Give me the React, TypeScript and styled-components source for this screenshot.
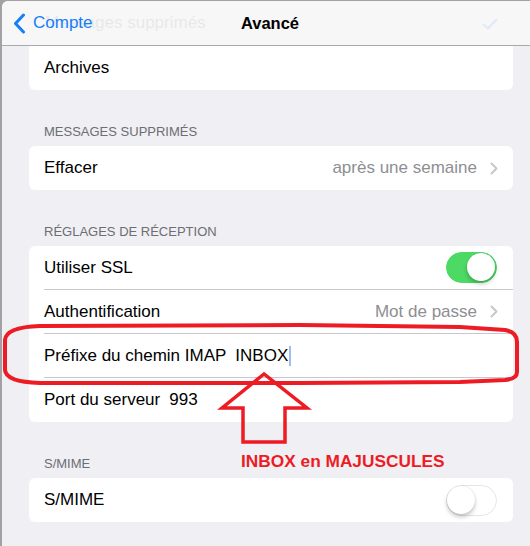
import styled, { createGlobalStyle } from 'styled-components';

const GlobalStyle = createGlobalStyle`
  html, body {
    margin: 0;
    padding: 0;
    background: #a2a2a4;
    overflow: hidden;
  }
  body {
    font-family: "Liberation Sans", Arial, sans-serif;
    -webkit-font-smoothing: antialiased;
  }
`;

const Chevron = () => (
  <svg width="8" height="13" viewBox="0 0 8 13">
    <path d="M1.5 1.5 L6.5 6.5 L1.5 11.5" fill="none" stroke="#c7c7cc" strokeWidth="2" strokeLinecap="round" strokeLinejoin="round" />
  </svg>
);

const BackArrow = () => (
  <svg width="13" height="21" viewBox="0 0 13 21">
    <path d="M10.5 2 L2.5 10.5 L10.5 19" fill="none" stroke="#157efb" strokeWidth="3" strokeLinecap="round" strokeLinejoin="round" />
  </svg>
);

export default function App() {
  return (
    <Page>
      <GlobalStyle />
      <Sheet>
        <NavBar>
          <BackButton>
            <BackArrow />
            <span>Compte</span>
          </BackButton>
          <Title>Avancé</Title>
          <span />
          <GhostTitle>Messages supprimés</GhostTitle>
          <GhostCheck width="16" height="12" viewBox="0 0 16 12">
            <path d="M1.5 6.5 L6 10.5 L14.5 1.5" fill="none" stroke="#157efb" strokeWidth="2" strokeLinecap="round" strokeLinejoin="round" />
          </GhostCheck>
        </NavBar>

        <Content>
          <Card $flatTop>
            <Row>
              <RowInner>
                <Label>Archives</Label>
              </RowInner>
            </Row>
          </Card>

          <Group>
            <GroupTitle>Messages supprimés</GroupTitle>
            <Card>
              <Row>
                <RowInner>
                  <Label>Effacer</Label>
                  <Detail>
                    <Value>après une semaine</Value>
                    <Chevron />
                  </Detail>
                </RowInner>
              </Row>
            </Card>
          </Group>

          <Group>
            <GroupTitle>Réglages de réception</GroupTitle>
            <Card>
              <Row>
                <RowInner $switch>
                  <Label>Utiliser SSL</Label>
                  <Switch $on>
                    <Knob $on />
                  </Switch>
                </RowInner>
              </Row>
              <Row>
                <RowInner>
                  <Label>Authentification</Label>
                  <Detail>
                    <Value>Mot de passe</Value>
                    <Chevron />
                  </Detail>
                </RowInner>
              </Row>
              <Row>
                <RowInner>
                  <FieldLine>
                    <Label>Préfixe du chemin IMAP</Label>
                    <FieldValue>INBOX</FieldValue>
                    <Caret />
                  </FieldLine>
                </RowInner>
              </Row>
              <Row>
                <RowInner>
                  <FieldLine>
                    <Label>Port du serveur</Label>
                    <FieldValue>993</FieldValue>
                  </FieldLine>
                </RowInner>
              </Row>
            </Card>
          </Group>

          <Group>
            <GroupTitle>S/MIME</GroupTitle>
            <Card>
              <Row>
                <RowInner $switch>
                  <Label>S/MIME</Label>
                  <Switch>
                    <Knob />
                  </Switch>
                </RowInner>
              </Row>
            </Card>
          </Group>
        </Content>
      </Sheet>

      <Annotation>
        <svg width="530" height="546" viewBox="0 0 530 546">
          <path
            d="M40 326 L300 325 L460 327 L505 330 Q517 332 517 342 L517 372 Q517 379 505 380 L460 382 L300 383 L40 383 Q6 382 5 370 L5 340 Q6 327 40 326 Z"
            fill="none"
            stroke="#ed1c24"
            strokeWidth="4"
          />
          <path
            d="M264 374 L222 408 L243 408 L243 442 L285 442 L285 408 L307 408 Z"
            fill="none"
            stroke="#ed1c24"
            strokeWidth="3.5"
            strokeLinejoin="miter"
          />
        </svg>
        <Note>INBOX en MAJUSCULES</Note>
      </Annotation>
    </Page>
  );
}

const Page = styled.div`
  position: relative;
  width: 530px;
  height: 546px;
  overflow: hidden;
`;

const Sheet = styled.div`
  margin: 1px 0 0 2px;
  width: 536px;
  height: 545px;
  background: #efeff4;
  border-top-left-radius: 6px;
  overflow: hidden;
`;

const NavBar = styled.header`
  position: relative;
  height: 44px;
  background: #f7f7f7;
  border-bottom: 1px solid #a9a9ac;
  display: grid;
  grid-template-columns: 1fr auto 1fr;
  align-items: center;
`;

const BackButton = styled.div`
  display: flex;
  align-items: center;
  gap: 7px;
  padding-left: 11px;
  color: #157efb;
  font-size: 17px;
  position: relative;
  z-index: 1;
`;

const Title = styled.div`
  font-size: 16.5px;
  font-weight: 700;
  color: #000;
`;

const GhostTitle = styled.span`
  position: absolute;
  left: 43px;
  top: 12px;
  font-size: 17px;
  color: #000;
  opacity: 0.06;
`;

const GhostCheck = styled.svg`
  position: absolute;
  right: 40px;
  top: 17px;
  opacity: 0.1;
`;

const Content = styled.div`
  padding: 0 25px 0 27px;
`;

const Group = styled.section`
  padding-top: 32px;
`;

const GroupTitle = styled.div`
  height: 20px;
  line-height: 20px;
  margin-bottom: 4px;
  padding-left: 15px;
  font-size: 13px;
  text-transform: uppercase;
  color: #6d6d72;
`;

const Card = styled.div<{ $flatTop?: boolean }>`
  background: #fff;
  border-radius: ${(p) => (p.$flatTop ? '0 0 6px 6px' : '6px')};
  overflow: hidden;
`;

const Row = styled.div`
  padding-left: 15px;

  &:last-child > div {
    border-bottom: none;
  }
`;

const RowInner = styled.div<{ $switch?: boolean }>`
  height: 44px;
  box-sizing: border-box;
  display: flex;
  align-items: center;
  justify-content: space-between;
  padding-right: ${(p) => (p.$switch ? '16px' : '15px')};
  border-bottom: 1px solid #c8c7cc;
`;

const Label = styled.span`
  font-size: 17px;
  color: #000;
`;

const Detail = styled.div`
  display: flex;
  align-items: center;
  gap: 13px;
`;

const Value = styled.span`
  font-size: 17px;
  color: #8e8e93;
`;

const FieldLine = styled.div`
  display: flex;
  align-items: center;
`;

const FieldValue = styled.span`
  margin-left: 9px;
  font-size: 17px;
  color: #000;
`;

const Caret = styled.span`
  width: 2px;
  height: 20px;
  margin-left: 1px;
  background: #9dbdf3;
`;

const Switch = styled.div<{ $on?: boolean }>`
  position: relative;
  width: 51px;
  height: 31px;
  box-sizing: border-box;
  border-radius: 16px;
  background: ${(p) => (p.$on ? '#4cd964' : '#fff')};
  border: 1.5px solid ${(p) => (p.$on ? '#4cd964' : '#e5e5e5')};
`;

const Knob = styled.div<{ $on?: boolean }>`
  position: absolute;
  top: 0;
  left: ${(p) => (p.$on ? '20px' : '0')};
  width: 28px;
  height: 28px;
  border-radius: 50%;
  background: #fff;
  box-shadow: 0 3px 4px rgba(0, 0, 0, 0.22), 0 0 0 0.5px rgba(0, 0, 0, 0.08);
`;

const Annotation = styled.div`
  position: absolute;
  inset: 0;
  pointer-events: none;

  svg {
    display: block;
  }
`;

const Note = styled.div`
  position: absolute;
  left: 241px;
  top: 451px;
  line-height: 20px;
  font-size: 17.3px;
  font-weight: 700;
  color: #ed1c24;
  white-space: nowrap;
`;
